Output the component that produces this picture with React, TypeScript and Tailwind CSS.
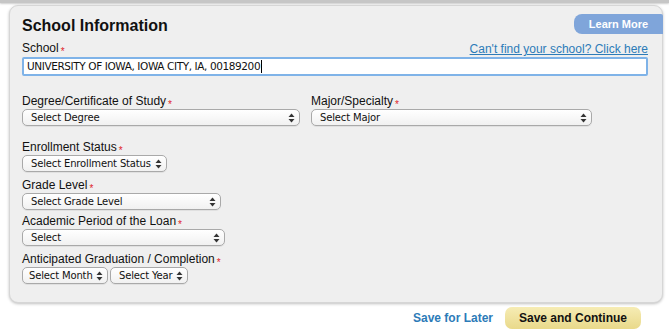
import React from "react";

const Req = () => <span className="inline-block text-[#e0242b] text-[10px] leading-none ml-[2px] relative top-[3px]">*</span>;

const Arrows = () => (
  <svg width="7" height="10" viewBox="0 0 7 10" className="shrink-0">
    <path d="M3.5 0.5 L6.5 4 L0.5 4 Z" fill="#333" />
    <path d="M3.5 9.5 L6.5 6 L0.5 6 Z" fill="#333" />
  </svg>
);

const Select = ({ label, className }: { label: string; className: string }) => (
  <div
    className={`h-[17px] flex items-center justify-between pl-[8px] pr-[4px] rounded-[5px] border border-[#a9a9a9] bg-gradient-to-b from-white to-[#f1f1f1] shadow-[0_1px_0_rgba(0,0,0,0.06)] text-[10px] text-[#111] font-['DejaVu_Sans',sans-serif] leading-none whitespace-nowrap ${className}`}
  >
    <span className="tracking-[-0.15px]">{label}</span>
    <Arrows />
  </div>
);

const Label = ({ children }: { children: React.ReactNode }) => (
  <div className="h-[14px] text-[12px] leading-[13px] text-[#111] whitespace-nowrap">
    {children}
    <Req />
  </div>
);

export default function App() {
  return (
    <div className="w-[669px] h-[336px] bg-white relative overflow-hidden font-['Liberation_Sans',Arial,sans-serif]">
      <div className="h-[3px] bg-[#c6c6c6] shadow-[0_1px_2px_rgba(0,0,0,0.2)]" />
      <div className="ml-[9px] mr-[6px] mt-[2px] h-[298px] bg-[#efefef] rounded-[9px] border border-[#d6d6d6] shadow-[0_1px_3px_rgba(0,0,0,0.25)] relative pl-[12px] pr-[14px] pt-[11px]">
        <div className="absolute right-[-1px] top-[8px] w-[89px] h-[20px] bg-[#7fa5da] rounded-l-[8px] rounded-tr-[2px] flex items-center justify-center text-white text-[11px] font-bold">
          Learn More
        </div>
        <div className="text-[16px] font-bold text-[#111] leading-[18px]">School Information</div>
        <div className="flex justify-between items-end mt-[7px]">
          <Label>School</Label>
          <a className="text-[12px] leading-[13px] text-[#2c7bb8] underline">Can't find your school? Click here</a>
        </div>
        <div className="mt-[1px] h-[19px] border-2 border-[#7fb3e8] rounded-[2px] bg-white flex items-center pl-[3px] text-[10.5px] font-['DejaVu_Sans',sans-serif] text-[#111] tracking-[-0.4px] whitespace-nowrap">
          UNIVERSITY OF IOWA, IOWA CITY, IA, 00189200
          <span className="w-[1px] h-[13px] bg-black ml-[1px]" />
        </div>
        <div className="flex mt-[19px] gap-[11px]">
          <div>
            <Label>Degree/Certificate of Study</Label>
            <Select label="Select Degree" className="w-[278px]" />
          </div>
          <div>
            <Label>Major/Specialty</Label>
            <Select label="Select Major" className="w-[281px]" />
          </div>
        </div>
        <div className="mt-[15px]">
          <Label>Enrollment Status</Label>
          <Select label="Select Enrollment Status" className="w-[145px]" />
        </div>
        <div className="mt-[7px]">
          <Label>Grade Level</Label>
          <Select label="Select Grade Level" className="w-[199px]" />
        </div>
        <div className="mt-[5px]">
          <Label>Academic Period of the Loan</Label>
          <Select label="Select" className="w-[203px]" />
        </div>
        <div className="mt-[7px]">
          <Label>Anticipated Graduation / Completion</Label>
          <div className="flex gap-[2px]">
            <Select label="Select Month" className="w-[86px] !pl-[6px]" />
            <Select label="Select Year" className="w-[78px]" />
          </div>
        </div>
      </div>
      <div className="flex justify-end items-center gap-[12px] mr-[28px] mt-[4px]">
        <a className="text-[12px] font-bold text-[#2c7bb8]">Save for Later</a>
        <div className="w-[136px] h-[22px] rounded-[7px] bg-gradient-to-b from-[#f6ecb4] to-[#e9d98a] flex items-center justify-center text-[12px] font-bold text-[#111]">
          Save and Continue
        </div>
      </div>
    </div>
  );
}
